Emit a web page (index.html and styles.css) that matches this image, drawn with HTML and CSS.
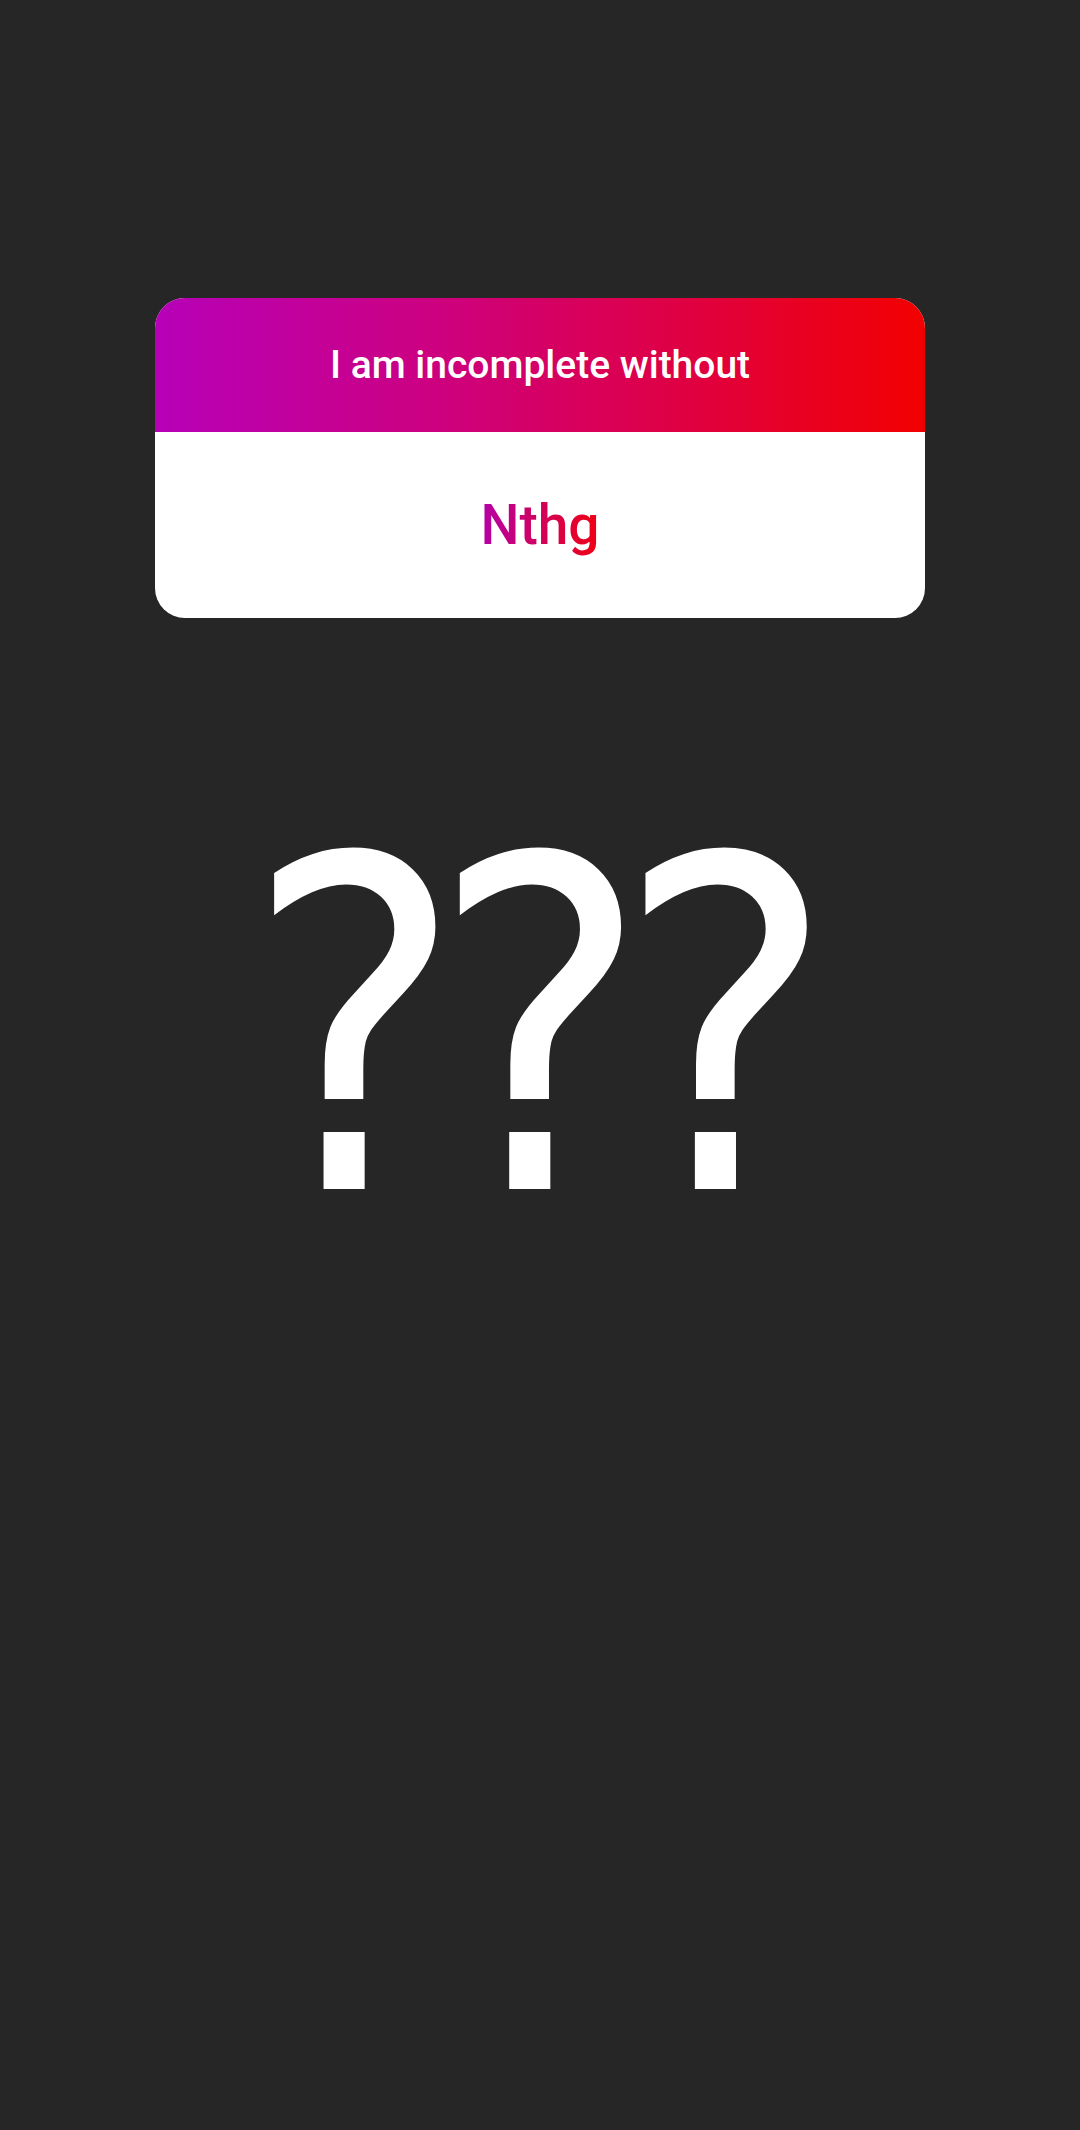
FILE: index.html
```html
<!DOCTYPE html>
<html>
<head>
<meta charset="utf-8">
<link rel="stylesheet" href="styles.css">
</head>
<body>
<main class="screen">
  <section class="card">
    <div class="card-head">I am incomplete without</div>
    <div class="card-body"><span class="answer">Nthg</span></div>
  </section>
  <div class="marks">???</div>
</main>
</body>
</html>
```
FILE: styles.css
```css
html, body { margin: 0; padding: 0; }
body { background: #262626; font-family: Roboto, "Noto Sans", sans-serif; }
.screen { width: 1080px; height: 2130px; display: flex; flex-direction: column; align-items: center; }
.card { margin-top: 298px; width: 770px; border-radius: 30px; overflow: hidden; background: #fff; display: flex; flex-direction: column; }
.card-head { height: 134px; display: flex; align-items: center; justify-content: center; color: #fff; font-size: 39px; font-weight: 500; background: linear-gradient(90deg, #b600b8 0%, #cc0082 35%, #e00040 70%, #f20000 100%); }
.card-body { height: 186px; display: flex; align-items: center; justify-content: center; }
.answer { font-size: 55px; font-weight: 500; background: linear-gradient(90deg, #b400a8, #f00010); -webkit-background-clip: text; background-clip: text; color: transparent; }
.marks { margin-top: 182px; margin-right: 34px; color: #fff; font-size: 460px; font-family: "DejaVu Sans Condensed", "DejaVu Sans", sans-serif; font-weight: 400; line-height: 1; letter-spacing: -34px; }
```
